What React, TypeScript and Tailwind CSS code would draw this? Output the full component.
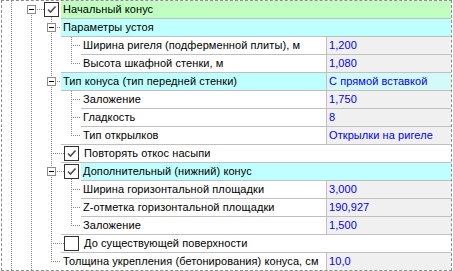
import React from 'react'

type Guide = 'v' | 'tee' | 'end' | 'box' | 'boxNoTop' | 'none'

interface Row {
  cols:     Guide[]
  check?:   { checked: boolean; inside?: boolean; down?: boolean }
  label:    string
  value?:   string
  bg?:      'green' | 'cyan'
  topLine?: boolean
}

const rows: Row[] = [
  { cols: ['v', 'boxNoTop'], check: { checked: true, down: true }, label: 'Начальный конус', bg: 'green' },
  { cols: ['v', 'v', 'box'], label: 'Параметры устоя', bg: 'cyan' },
  { cols: ['v', 'v', 'v', 'tee'], label: 'Ширина ригеля (подферменной плиты), м', value: '1,200' },
  { cols: ['v', 'v', 'v', 'end'], label: 'Высота шкафной стенки, м', value: '1,080' },
  { cols: ['v', 'v', 'box'], label: 'Тип конуса (тип передней стенки)', value: 'С прямой вставкой', bg: 'cyan', topLine: true },
  { cols: ['v', 'v', 'v', 'tee'], label: 'Заложение', value: '1,750' },
  { cols: ['v', 'v', 'v', 'tee'], label: 'Гладкость', value: '8' },
  { cols: ['v', 'v', 'v', 'end'], label: 'Тип открылков', value: 'Открылки на ригеле' },
  { cols: ['v', 'v', 'tee'], check: { checked: true, inside: true }, label: 'Повторять откос насыпи', topLine: true },
  { cols: ['v', 'v', 'box'], check: { checked: true, down: true }, label: 'Дополнительный (нижний) конус', bg: 'cyan' },
  { cols: ['v', 'v', 'v', 'tee'], label: 'Ширина горизонтальной площадки', value: '3,000' },
  { cols: ['v', 'v', 'v', 'tee'], label: 'Z-отметка горизонтальной площадки', value: '190,927' },
  { cols: ['v', 'v', 'v', 'end'], label: 'Заложение', value: '1,500' },
  { cols: ['v', 'v', 'tee'], check: { checked: false, inside: true }, label: 'До существующей поверхности', topLine: true },
  { cols: ['v', 'v', 'end'], label: 'Толщина укрепления (бетонирования) конуса, см', value: '10,0' },
]

const DOT = '#858585'

// one 20px indent column of the tree (first one is 19px)
function GuideCol({ kind, w }: { kind: Guide; w: number }) {
  const cx = w === 19 ? 9 : 10
  const x = cx + 0.5
  const isBox = kind === 'box' || kind === 'boxNoTop'
  return (
    <svg width={w} height={18} className="block shrink-0" shapeRendering="crispEdges">
      <g stroke={DOT} strokeWidth={1} strokeDasharray="1 1">
        {(kind === 'v' || kind === 'tee') && <line x1={x} y1={0} x2={x} y2={18} />}
        {kind === 'end' && <line x1={x} y1={0} x2={x} y2={9} />}
        {(kind === 'tee' || kind === 'end') && <line x1={cx + 2} y1={8.5} x2={w} y2={8.5} />}
        {kind === 'box' && <line x1={x} y1={0} x2={x} y2={4} />}
        {isBox && <line x1={x} y1={14} x2={x} y2={18} />}
        {isBox && <line x1={cx + 6} y1={8.5} x2={w} y2={8.5} />}
      </g>
      {isBox && (
        <>
          <rect x={cx - 4 + 0.5} y={4.5} width={8} height={8} fill="#fff" stroke="#8c8c8c" />
          <line x1={cx - 2} y1={8.5} x2={cx + 3} y2={8.5} stroke="#000" />
        </>
      )}
    </svg>
  )
}

function CheckBox({ checked }: { checked: boolean }) {
  return (
    <div className="relative w-[15px] h-[15px] shrink-0 border border-[#333333] bg-white">
      {checked && (
        <svg width={13} height={13} className="block">
          <path d="M3 6.5 L5.5 9 L10.5 3.5" fill="none" stroke="#4d4d4d" strokeWidth={1.6} />
        </svg>
      )}
    </div>
  )
}

function CheckCol({ checked, down }: { checked: boolean; down?: boolean }) {
  return (
    <div className="relative w-[20px] h-[18px] shrink-0">
      <svg className="absolute inset-0" width={20} height={18} shapeRendering="crispEdges">
        <g stroke={DOT} strokeDasharray="1 1">
          <line x1={0} y1={8.5} x2={3} y2={8.5} />
          {down && <line x1={10.5} y1={16} x2={10.5} y2={18} />}
        </g>
      </svg>
      <div className="ml-[3px] mt-px">
        <CheckBox checked={checked} />
      </div>
    </div>
  )
}

export default function App() {
  return (
    <div className="w-[453px] h-[271px] bg-white pl-px"
      style={{ fontFamily: '"Liberation Sans", Arial, sans-serif' }}>
      <div className="w-[451px] h-[271px] border border-dashed border-[#8c8c8c] overflow-hidden text-[11px] leading-[17px] tracking-[0.08px] text-black">
        {rows.map((r, i) => (
          <div key={i} className="flex h-[18px]">
            {r.cols.map((c, j) => <GuideCol key={j} kind={c} w={j === 0 ? 19 : 20} />)}
            {r.check && !r.check.inside && <CheckCol checked={r.check.checked} down={r.check.down} />}

            <div className={`flex flex-1 min-w-0 border-b border-[#c0c0c0] ${
              r.topLine ? '-mt-px h-[19px] border-t' : 'h-[18px]'} ${
              r.bg === 'green' ? 'bg-[#c0ffc0]' : r.bg === 'cyan' ? 'bg-[#c0ffff]' : 'bg-white'}`}>
              <div className="flex flex-1 min-w-0 items-center whitespace-nowrap overflow-hidden">
                {r.check?.inside && (
                  <>
                    <svg width={3} height={17} className="block shrink-0" shapeRendering="crispEdges">
                      <line x1={0} y1={8.5} x2={3} y2={8.5} stroke={DOT} strokeDasharray="1 1" />
                    </svg>
                    <CheckBox checked={r.check.checked} />
                    <span className="pl-[5px]">{r.label}</span>
                  </>
                )}
                {!r.check?.inside && <span className="pl-[2px]">{r.label}</span>}
              </div>
              {r.value && (
                <div className={`w-[125px] shrink-0 border-l border-[#c0c0c0] pl-[2px] text-[#0000ff] whitespace-nowrap ${
                  r.bg === 'cyan' ? 'bg-[#d4f9f9]' : 'bg-[#f0f0f0]'}`}>
                  {r.value}
                </div>
              )}
            </div>
          </div>
        ))}
      </div>
    </div>
  )
}
